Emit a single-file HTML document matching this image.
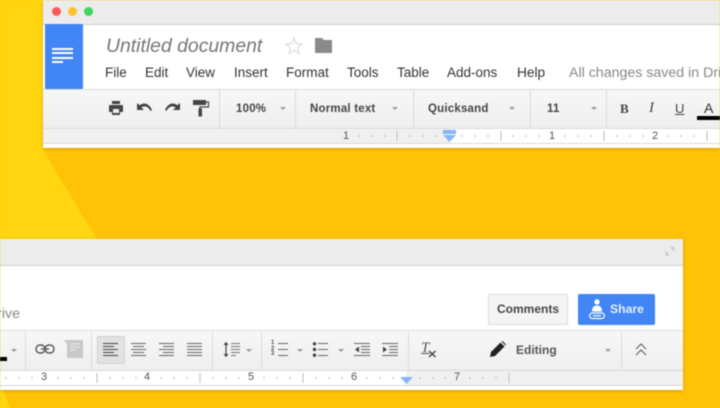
<!DOCTYPE html>
<html><head><meta charset="utf-8">
<style>
html,body{margin:0;padding:0;width:720px;height:408px;overflow:hidden;background:#ffc207}
#r{position:absolute;left:0;top:0;width:720px;height:408px;overflow:hidden;filter:blur(.5px);font-family:"Liberation Sans",sans-serif}
.a{position:absolute;white-space:nowrap}
.w{position:absolute;background:#fff;box-shadow:0 1px 3px rgba(120,80,0,.35)}
.b{font-weight:bold;color:#444;font-size:11.5px;letter-spacing:.2px}
.m{font-size:13.5px;color:#333;top:65px}
.sep{position:absolute;width:1px;background:#dadada}
.n{font-size:11px;color:#555;position:absolute}
.arr{position:absolute;width:0;height:0;border-left:3px solid transparent;border-right:3px solid transparent;border-top:3px solid #999}
svg{position:absolute;overflow:visible}
</style></head><body><div id="r">
<svg style="left:0;top:0" width="720" height="408"><polygon points="0,0 50,0 43,150 97,239 0,239" fill="#ffd60f"/><polygon points="0,390 3,390 10,408 0,408" fill="#ffd60f"/></svg>

<!-- top window -->
<div class="w" style="left:43px;top:0;width:677px;height:148px">
<div class="a" style="left:0;top:0;width:677px;height:24px;background:#ececec;border-bottom:1px solid #cfcfcf"></div>
<div class="a" style="left:9px;top:7px;width:9px;height:9px;border-radius:50%;background:#fb5a5a"></div>
<div class="a" style="left:25px;top:7px;width:9px;height:9px;border-radius:50%;background:#fdc22f"></div>
<div class="a" style="left:41px;top:7px;width:9px;height:9px;border-radius:50%;background:#3fd45b"></div>
<div class="a" style="left:2px;top:24px;width:38px;height:65px;background:#4285f4"></div>
<div class="a" style="left:9px;top:48px;width:21px;height:2px;background:#fff"></div>
<div class="a" style="left:9px;top:52px;width:21px;height:2px;background:#fff"></div>
<div class="a" style="left:9px;top:57px;width:21px;height:2px;background:#fff"></div>
<div class="a" style="left:9px;top:61px;width:11px;height:2px;background:#fff"></div>
<div class="a" style="left:0;top:89px;width:677px;height:39px;background:linear-gradient(#f7f7f7,#efefef);border-top:1px solid #dcdcdc;box-sizing:border-box"></div>
<div class="a" style="left:0;top:128px;width:677px;height:16px;background:#f0f0f0;border-top:1px solid #dadada;border-bottom:1px solid #dadada;box-sizing:border-box"></div>
<div class="a" style="left:407px;top:129px;width:270px;height:14px;background:#fff"></div>
</div>
<div class="a" style="left:106px;top:35px;font-size:19.4px;font-style:italic;color:#777">Untitled document</div>
<svg style="left:285px;top:37px" width="18" height="18" viewBox="0 0 18 18"><path d="M9 1l2.200 5.600 6 .4-4.600 3.800 1.500 5.800L9 13.500 3.900 16.600l1.500-5.800L.8 7l6-.4z" fill="none" stroke="#ddd" stroke-width="1.200"/></svg>
<svg style="left:314px;top:38px" width="19" height="15" viewBox="0 0 19 15"><path d="M1 0h7l2 2h8v13H1z" fill="#8a8a8a"/></svg>
<div class="a m" style="left:105px">File</div>
<div class="a m" style="left:145px">Edit</div>
<div class="a m" style="left:186px">View</div>
<div class="a m" style="left:234px">Insert</div>
<div class="a m" style="left:286px">Format</div>
<div class="a m" style="left:347px">Tools</div>
<div class="a m" style="left:397px">Table</div>
<div class="a m" style="left:447px">Add-ons</div>
<div class="a m" style="left:517px;font-size:13.7px">Help</div>
<div class="a m" style="left:569px;color:#888;font-size:14.2px">All changes saved in Drive</div>

<!-- top toolbar icons -->
<svg style="left:108px;top:100px" width="16" height="16" viewBox="0 0 16 16"><path d="M4 1h8v3H4zM1 5h14v7h-3v3H4v-3H1z" fill="#444"/><rect x="5" y="9" width="6" height="4" fill="#eee"/></svg>
<svg style="left:136px;top:102px" width="16" height="11" viewBox="0 0 16 11"><path d="M1 1v7h7L5.500 5.500C8 3.500 12 4 14.500 9L16 8C13 1 7.500 0 3.800 3.300z" fill="#444"/></svg>
<svg style="left:165px;top:102px" width="16" height="11" viewBox="0 0 16 11"><path d="M15 1v7H8l2.500-2.500C8 3.500 4 4 1.500 9L0 8C3 1 8.500 0 12.200 3.300z" fill="#444"/></svg>
<svg style="left:193px;top:99px" width="16" height="18" viewBox="0 0 16 18"><path d="M0 1h13v5H0z" fill="#444"/><path d="M13 3h2.500v5H7v2" fill="none" stroke="#444" stroke-width="1.200"/><rect x="5.500" y="9.500" width="3.500" height="8" fill="#444"/></svg>
<div class="sep" style="left:219px;top:90px;height:38px"></div>
<div class="sep" style="left:295px;top:90px;height:38px"></div>
<div class="sep" style="left:413px;top:90px;height:38px"></div>
<div class="sep" style="left:530px;top:90px;height:38px"></div>
<div class="sep" style="left:606px;top:90px;height:38px"></div>
<div class="a b" style="left:236px;top:102px;line-height:14px">100%</div><div class="arr" style="left:280px;top:107px"></div>
<div class="a b" style="left:310px;top:102px;line-height:14px">Normal text</div><div class="arr" style="left:392px;top:107px"></div>
<div class="a b" style="left:428px;top:102px;line-height:14px">Quicksand</div><div class="arr" style="left:509px;top:107px"></div>
<div class="a b" style="left:547px;top:102px;line-height:14px">11</div><div class="arr" style="left:591px;top:107px"></div>
<div class="a" style="left:620px;top:101px;font:bold 13px 'Liberation Serif',serif;color:#444">B</div>
<div class="a" style="left:649px;top:100px;font:italic 15px 'Liberation Serif',serif;color:#444">I</div>
<div class="a" style="left:675px;top:101px;font-size:13px;color:#444;text-decoration:underline">U</div>
<div class="a" style="left:704px;top:100px;font-size:14px;color:#333">A</div>
<div class="a" style="left:697px;top:116px;width:23px;height:4px;background:#000"></div>
<div class="n" style="left:343px;top:130px">1</div><div class="n" style="left:549px;top:130px">1</div><div class="n" style="left:652px;top:130px">2</div>
<svg style="left:43px;top:129px" width="677" height="15"><g stroke="#bbb" stroke-width="1">
<path d="M316 6v2M329 6v2M342 6v2M354 2v10M367 6v2M380 6v2M393 6v2M405 6v2M419 6v2M432 6v2M445 6v2M458 2v10M470 6v2M483 6v2M496 6v2M522 6v2M535 6v2M548 6v2M561 2v10M574 6v2M587 6v2M600 6v2M625 6v2M638 6v2M651 6v2M664 2v10"/></g></svg>
<svg style="left:443px;top:130px" width="13" height="13"><rect x="0" y="0" width="13" height="4" fill="#8ab4f8"/><path d="M0 5h13l-6.500 7z" fill="#8ab4f8"/></svg>

<!-- bottom window -->
<div class="w" style="left:-10px;top:239px;width:693px;height:151px">
<div class="a" style="left:0;top:0;width:693px;height:26px;background:#ececec;border-bottom:1px solid #cfcfcf"></div>
<div class="a" style="left:0;top:91px;width:693px;height:40px;background:linear-gradient(#f7f7f7,#efefef);border-top:1px solid #dcdcdc;box-sizing:border-box"></div>
<div class="a" style="left:0;top:131px;width:693px;height:16px;background:#f0f0f0;border-top:1px solid #dadada;border-bottom:1px solid #dadada;box-sizing:border-box"></div>
<div class="a" style="left:0;top:132px;width:416px;height:14px;background:#fff"></div>
</div>
<svg style="left:665px;top:246px" width="10" height="10"><path d="M5 1h4.500v4.500zM5 9.500H.5V5z" fill="#c8c8c8"/></svg>
<div class="a m" style="left:0;top:306px;color:#888;font-size:14.2px;width:20px;overflow:hidden;text-align:right;direction:rtl">rive</div>
<div class="a" style="left:488px;top:294px;width:80px;height:31px;box-sizing:border-box;background:#f4f4f4;border:1px solid #ddd;border-radius:2px;text-align:center;font:bold 12px/29px 'Liberation Sans',sans-serif;color:#444">Comments</div>
<div class="a" style="left:578px;top:294px;width:77px;height:31px;background:#4285f4;border-radius:2px"></div>
<div class="a" style="left:610px;top:302px;font:bold 12.2px 'Liberation Sans',sans-serif;color:#e8f0fe">Share</div>
<svg style="left:589px;top:298px" width="16" height="22" viewBox="0 0 16 22"><circle cx="8" cy="4" r="2.700" fill="#fff"/><path d="M3 13.500c0-4.500 2-6 5-6s5 1.500 5 6z" fill="#fff"/><rect x=".6" y="15" width="14.800" height="5.500" rx="2.700" fill="none" stroke="#fff" stroke-width="1.200"/><path d="M4 17.700h8" stroke="#fff" stroke-width="1.200"/></svg>

<div class="a" style="left:-2px;top:357px;width:9px;height:4px;background:#000"></div>
<div class="arr" style="left:11px;top:349px"></div>
<div class="sep" style="left:25px;top:332px;height:38px"></div>
<svg style="left:35px;top:344px" width="20" height="10" viewBox="0 0 20 10"><rect x="1" y="1" width="9" height="8" rx="4" fill="none" stroke="#555" stroke-width="1.400"/><rect x="10" y="1" width="9" height="8" rx="4" fill="none" stroke="#555" stroke-width="1.400"/><rect x="6" y="4.300" width="8" height="1.400" fill="#555"/></svg>
<svg style="left:64px;top:340px" width="19" height="18" viewBox="0 0 19 18"><path d="M0 0h19v18H3V4z" fill="#c8c8c8"/><path d="M6 4h10M6 7h10M6 10h6" stroke="#e4e4e4" stroke-width="1.300"/></svg>
<div class="sep" style="left:91px;top:332px;height:38px"></div>
<div class="a" style="left:97px;top:336px;width:28px;height:28px;box-sizing:border-box;background:#e2e2e2;border:1px solid #d2d2d2;border-radius:2px"></div>
<svg style="left:102px;top:342px" width="110" height="16"><g stroke="#666" stroke-width="1.100" fill="none">
<path d="M1 1.500h15M1 4.500h11M1 7.500h15M1 10.500h11M1 13.500h15" stroke="#444"/>
<path d="M29 1.500h15M31 4.500h11M29 7.500h15M31 10.500h11M29 13.500h15"/>
<path d="M57 1.500h15M61 4.500h11M57 7.500h15M61 10.500h11M57 13.500h15"/>
<path d="M85 1.500h15M85 4.500h15M85 7.500h15M85 10.500h15M85 13.500h15"/></g></svg>
<div class="sep" style="left:212px;top:332px;height:38px"></div>
<svg style="left:223px;top:341px" width="18" height="17"><path d="M3 2v13" stroke="#444" stroke-width="1.200"/><path d="M.5 4L3 .8 5.500 4zM.5 13L3 16.200 5.500 13z" fill="#444"/><path d="M8 2.500h9M8 5.500h9M8 8.500h9M8 11.500h9M8 14.500h5" stroke="#777" stroke-width="1.100"/></svg>
<div class="arr" style="left:246px;top:349px"></div>
<div class="sep" style="left:261px;top:332px;height:38px"></div>
<div class="a" style="left:271px;top:341px;font:bold 6px/5.500px 'Liberation Sans',sans-serif;color:#555">1<br>2<br>3</div>
<svg style="left:277px;top:342px" width="12" height="15"><path d="M1 1.500h10M1 7.500h10M1 13.500h10" stroke="#666" stroke-width="1.100"/></svg>
<div class="arr" style="left:297px;top:349px"></div>
<svg style="left:312px;top:342px" width="17" height="15"><circle cx="2.500" cy="1.800" r="1.700" fill="#444"/><circle cx="2.500" cy="7.500" r="1.700" fill="#444"/><circle cx="2.500" cy="13.200" r="1.700" fill="#444"/><path d="M6 1.500h10M6 7.500h10M6 13.500h10" stroke="#666" stroke-width="1.100"/></svg>
<div class="arr" style="left:338px;top:349px"></div>
<svg style="left:354px;top:342px" width="16" height="15"><path d="M0 1.500h16M7 4.500h9M7 7.500h9M7 10.500h9M0 13.500h16" stroke="#666" stroke-width="1.100"/><path d="M5 4.500v6L1 7.500z" fill="#444"/></svg>
<svg style="left:382px;top:342px" width="16" height="15"><path d="M0 1.500h16M7 4.500h9M7 7.500h9M7 10.500h9M0 13.500h16" stroke="#666" stroke-width="1.100"/><path d="M1 4.500v6l4-3z" fill="#444"/></svg>
<div class="sep" style="left:408px;top:332px;height:38px"></div>
<div class="a" style="left:421px;top:340px;font:italic 15px 'Liberation Serif',serif;color:#555;text-decoration:underline">T</div>
<svg style="left:428px;top:350px" width="9" height="8"><path d="M1 1l6.500 6M7.500 1L1 7" stroke="#444" stroke-width="1.500"/></svg>
<svg style="left:490px;top:341px" width="16" height="16" viewBox="0 0 16 16"><path d="M0 16l1-5L10.500 1.500l4 4L5 15z" fill="#222"/><path d="M11.500.5l1-.5 3.500 3.500-.5 1z" fill="#222"/></svg>
<div class="a" style="left:516px;top:343px;font:bold 12px 'Liberation Sans',sans-serif;color:#555">Editing</div>
<div class="arr" style="left:605px;top:349px"></div>
<div class="sep" style="left:621px;top:332px;height:38px"></div>
<svg style="left:635px;top:343px" width="12" height="13"><path d="M1 6l5-5 5 5M1 12l5-5 5 5" fill="none" stroke="#666" stroke-width="1.200"/></svg>
<div class="n" style="left:41px;top:371px">3</div><div class="n" style="left:144px;top:371px">4</div><div class="n" style="left:248px;top:371px">5</div><div class="n" style="left:351px;top:371px">6</div><div class="n" style="left:454px;top:371px">7</div>
<svg style="left:0;top:370px" width="720" height="15"><g stroke="#bbb" stroke-width="1">
<path d="M6 7v2M19 7v2M32 7v2M58 7v2M71 7v2M84 7v2M97 3v10M110 7v2M123 7v2M136 7v2M161 7v2M174 7v2M187 7v2M200 3v10M213 7v2M226 7v2M239 7v2M264 7v2M277 7v2M290 7v2M303 3v10M316 7v2M329 7v2M342 7v2M367 7v2M380 7v2M393 7v2M420 7v2M433 7v2M445 7v2M470 7v2M483 7v2M496 7v2M509 3v10"/></g></svg>
<svg style="left:400px;top:376px" width="13" height="9"><path d="M0 1h13l-6.500 7z" fill="#8ab4f8"/></svg>
</div></body></html>
